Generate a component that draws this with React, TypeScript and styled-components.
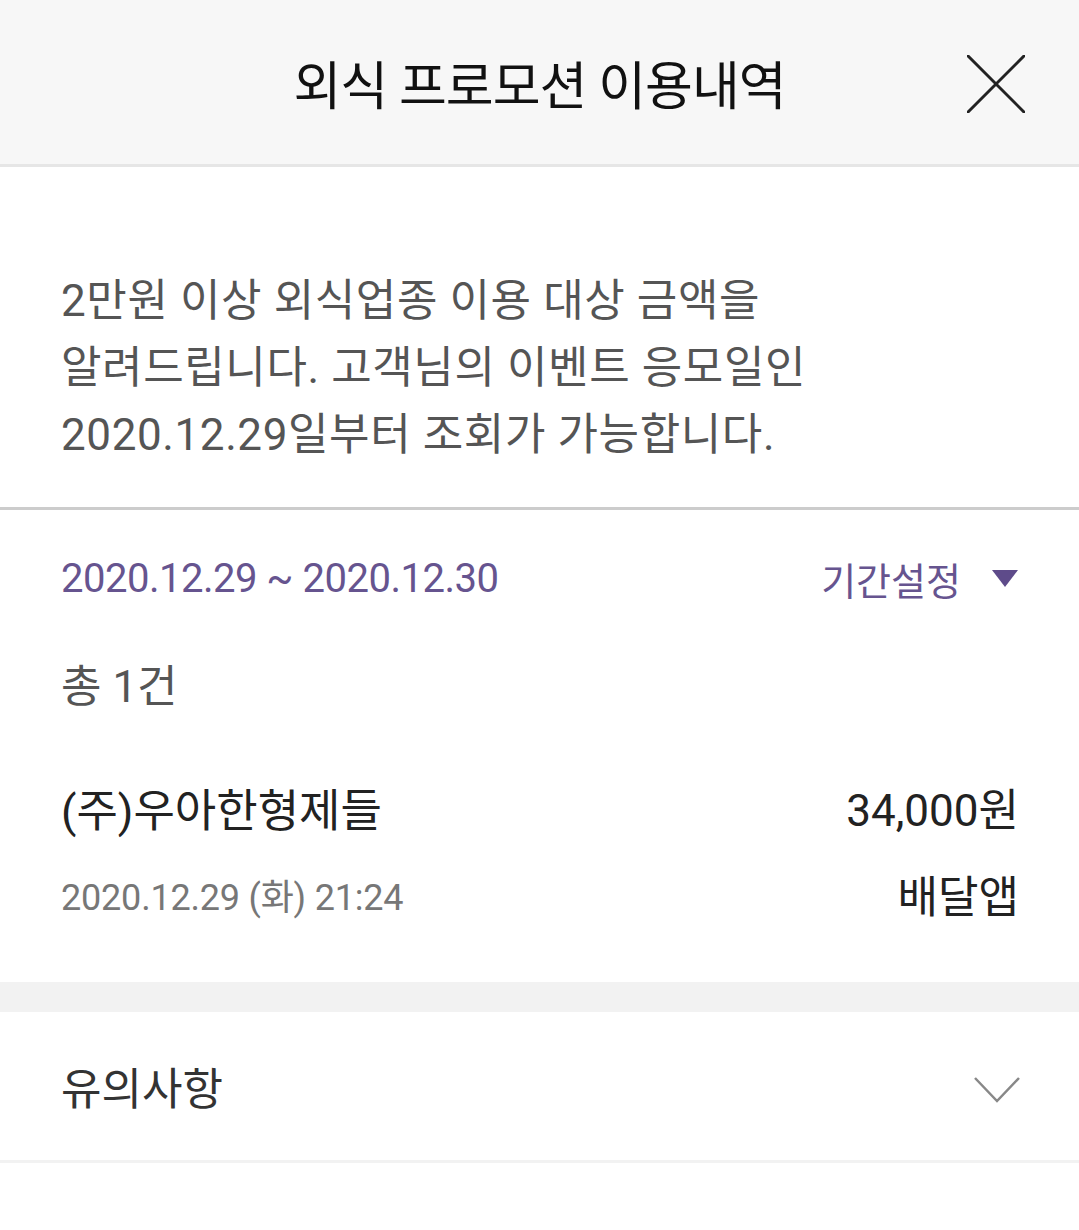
import React from "react";
import styled, { createGlobalStyle } from "styled-components";

const GlobalStyle = createGlobalStyle`
  html, body {
    margin: 0;
    padding: 0;
    background: #ffffff;
  }
  body {
    font-family: Roboto, "Noto Sans CJK KR", "Noto Sans", sans-serif;
  }
`;

const PURPLE = "#66548f";

const Page = styled.div`
  width: 1079px;
  min-height: 1230px;
  background: #ffffff;
`;

const Header = styled.header`
  position: relative;
  height: 164px;
  background: #f7f7f7;
  border-bottom: 3px solid #e6e6e6;
  display: flex;
  align-items: center;
  justify-content: center;
`;

const Title = styled.h1`
  margin: 0;
  font-size: 52px;
  font-weight: 400;
  letter-spacing: -1px;
  color: #111111;
`;

const CloseButton = styled.button`
  all: unset;
  position: absolute;
  right: 54px;
  top: 55px;
  width: 58px;
  height: 58px;
  cursor: pointer;
`;

const Notice = styled.section`
  padding: 101px 61px 38px;
  border-bottom: 3px solid #cccccc;
`;

const NoticeText = styled.p`
  margin: 0;
  font-size: 44px;
  line-height: 67px;
  letter-spacing: 0.6px;
  color: #555555;
`;

const Content = styled.section`
  padding: 38px 60px 58px 61px;
`;

const Row = styled.div<{ $gap?: number }>`
  display: flex;
  align-items: center;
  justify-content: space-between;
  height: 60px;
  margin-top: ${(p) => p.$gap ?? 0}px;
`;

const Text = styled.span<{ $size: number; $color: string; $ls?: number }>`
  font-size: ${(p) => p.$size}px;
  color: ${(p) => p.$color};
  letter-spacing: ${(p) => p.$ls ?? 0}px;
  white-space: nowrap;
`;

const PeriodButton = styled.button`
  all: unset;
  display: flex;
  align-items: center;
  gap: 30px;
  cursor: pointer;
`;

const Band = styled.div`
  height: 30px;
  background: #f2f2f2;
`;

const AccordionRow = styled.div`
  height: 148px;
  padding: 0 58px 0 61px;
  display: flex;
  align-items: center;
  justify-content: space-between;
  border-bottom: 3px solid #f2f2f2;
`;

const Chevron = styled.svg`
  margin-top: 8px;
`;

const App: React.FC = () => (
  <Page>
    <GlobalStyle />
    <Header>
      <Title>외식 프로모션 이용내역</Title>
      <CloseButton aria-label="닫기">
        <svg width="58" height="58" viewBox="0 0 58 58">
          <path d="M1 1 L57 57 M57 1 L1 57" stroke="#222" strokeWidth="3" strokeLinecap="round" />
        </svg>
      </CloseButton>
    </Header>

    <Notice>
      <NoticeText>
        2만원 이상 외식업종 이용 대상 금액을
        <br />
        알려드립니다. 고객님의 이벤트 응모일인
        <br />
        2020.12.29일부터 조회가 가능합니다.
      </NoticeText>
    </Notice>

    <Content>
      <Row>
        <Text $size={40} $color={PURPLE} $ls={-0.5}>
          2020.12.29 ~ 2020.12.30
        </Text>
        <PeriodButton>
          <Text $size={38} $color={PURPLE}>
            기간설정
          </Text>
          <svg width="28" height="18" viewBox="0 0 28 18">
            <path d="M1 1 H27 L14 18 Z" fill="#5e4b8a" />
          </svg>
        </PeriodButton>
      </Row>

      <Row $gap={45}>
        <Text $size={44} $color="#555555">
          총 1건
        </Text>
      </Row>

      <Row $gap={64}>
        <Text $size={45} $color="#222222">
          (주)우아한형제들
        </Text>
        <Text $size={44} $color="#222222">
          34,000원
        </Text>
      </Row>

      <Row $gap={27}>
        <Text $size={36} $color="#777777" $ls={-0.2}>
          2020.12.29 (화) 21:24
        </Text>
        <Text $size={44} $color="#222222">
          배달앱
        </Text>
      </Row>
    </Content>

    <Band />

    <AccordionRow>
      <Text $size={44} $color="#333333">
        유의사항
      </Text>
      <Chevron width="48" height="28" viewBox="0 0 48 28">
        <path d="M2 2 L24 25 L46 2" fill="none" stroke="#888" strokeWidth="2.5" />
      </Chevron>
    </AccordionRow>
  </Page>
);

export default App;
